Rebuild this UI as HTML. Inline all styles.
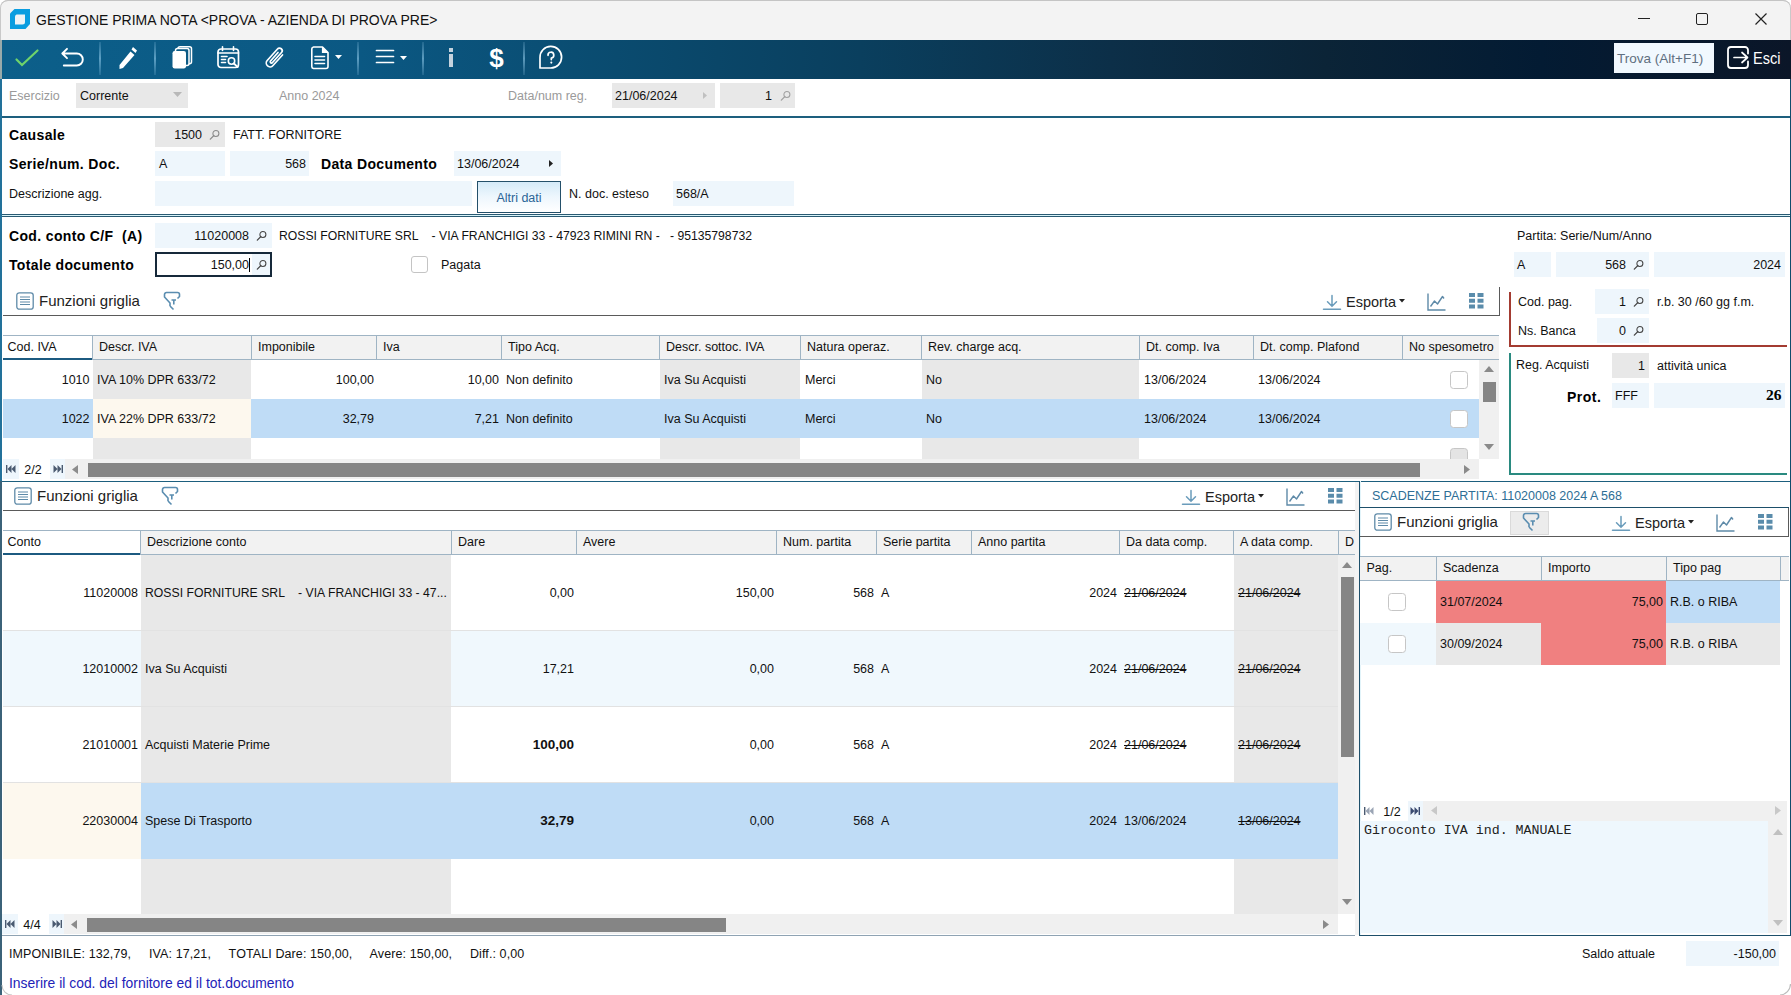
<!DOCTYPE html>
<html><head><meta charset="utf-8"><title>Gestione Prima Nota</title>
<style>
html,body{margin:0;padding:0}
body{width:1791px;height:995px;position:relative;overflow:hidden;background:#fff;font-family:"Liberation Sans",sans-serif;color:#000}
.a{position:absolute}
.t{position:absolute;white-space:pre;line-height:20px;height:20px}
svg.a{overflow:visible}
</style></head><body>

<div class="a" style="left:0px;top:0px;width:1791px;height:995px;background:#ffffff;"></div>
<div class="a" style="left:0px;top:0px;width:1791px;height:40px;background:#f3f3f3;border-radius:8px 8px 0 0;box-shadow:inset 0 1px 0 #c9c9c9, inset 1px 0 0 #c9c9c9, inset -1px 0 0 #c9c9c9;"></div>
<svg class="a" style="left:10px;top:9px" width="20" height="20" viewBox="0 0 20 20"><path d="M4.5 0 H20 V15 L15.5 20 H0 V4.5 Z" fill="#0a9de0"/><path d="M6.5 5.5 H15 V13 A2.5 2.5 0 0 1 12.5 15.5 H5 V8 A2.5 2.5 0 0 1 6.5 5.5 Z" fill="#eef3f6"/></svg>
<div class="t" style="top:9.50px;font-size:14px;left:36px;color:#111;transform:scaleY(1.08);transform-origin:0 50%;">GESTIONE PRIMA NOTA &lt;PROVA - AZIENDA DI PROVA PRE&gt;</div>
<div class="a" style="left:1638px;top:18px;width:12px;height:1.2px;background:#222;"></div>
<div class="a" style="left:1696px;top:13px;width:12px;height:12px;border:1.2px solid #222;border-radius:2px;box-sizing:border-box;"></div>
<svg class="a" style="left:1755px;top:13px" width="12" height="12" viewBox="0 0 12 12"><path d="M0.5 0.5 L11.5 11.5 M11.5 0.5 L0.5 11.5" stroke="#222" stroke-width="1.2"/></svg>
<div class="a" style="left:2px;top:40px;width:1789px;height:39px;background:linear-gradient(90deg,#0c5f8a 0%,#0b5883 20%,#0a4d72 32%,#0a3f5e 48%,#0c2f48 62%,#0b2437 74%,#031b33 86%,#0b1628 100%);"></div>
<div class="a" style="left:0px;top:40px;width:2px;height:39px;background:#9aa;"></div>
<div class="a" style="left:98.6px;top:42px;width:2px;height:33px;background:linear-gradient(180deg,rgba(160,210,240,0.15),rgba(160,215,245,0.55) 50%,rgba(160,210,240,0.15));"></div>
<div class="a" style="left:154px;top:42px;width:2px;height:33px;background:linear-gradient(180deg,rgba(160,210,240,0.15),rgba(160,215,245,0.55) 50%,rgba(160,210,240,0.15));"></div>
<div class="a" style="left:356.7px;top:42px;width:2px;height:33px;background:linear-gradient(180deg,rgba(160,210,240,0.15),rgba(160,215,245,0.55) 50%,rgba(160,210,240,0.15));"></div>
<div class="a" style="left:421.8px;top:42px;width:2px;height:33px;background:linear-gradient(180deg,rgba(160,210,240,0.15),rgba(160,215,245,0.55) 50%,rgba(160,210,240,0.15));"></div>
<div class="a" style="left:523px;top:42px;width:2px;height:33px;background:linear-gradient(180deg,rgba(160,210,240,0.15),rgba(160,215,245,0.55) 50%,rgba(160,210,240,0.15));"></div>
<svg class="a" style="left:15px;top:49px" width="24" height="18" viewBox="0 0 24 18"><path d="M1.5 10.5 L7 16 L22.5 1.5" stroke="#6fd36b" stroke-width="2.2" fill="none" stroke-linecap="round"/></svg>
<svg class="a" style="left:61px;top:47px" width="24" height="21" viewBox="0 0 24 21"><path d="M6 1.8 L1.3 6.5 L6 11.2 M1.3 6.5 H15.8 A6 6 0 0 1 15.8 18.5 H2.8" stroke="#fff" fill="none" stroke-linecap="round" stroke-linejoin="round" stroke-width="1.9"/></svg>
<svg class="a" style="left:119px;top:46px" width="19" height="24" viewBox="0 0 19 24"><path d="M14 1 L18 4.5 L16.5 7 L12.5 3.5 Z M11.5 5.5 L15.5 9 L4 22 L0.5 23 L0.5 19 Z" fill="#fff"/></svg>
<svg class="a" style="left:172px;top:46px" width="21" height="23" viewBox="0 0 21 23"><rect x="6" y="0.8" width="13.5" height="17" rx="2" fill="none" stroke="#fff" stroke-width="1.5"/><rect x="3.5" y="2.5" width="13.5" height="17" rx="2" fill="#0b5a84" stroke="#fff" stroke-width="1.5"/><rect x="0.5" y="5" width="13.5" height="17.5" rx="2.2" fill="#fff"/></svg>
<svg class="a" style="left:217px;top:46px" width="24" height="23" viewBox="0 0 24 23"><rect x="1" y="3" width="20.5" height="18.5" rx="3" stroke="#fff" fill="none" stroke-linecap="round" stroke-linejoin="round" stroke-width="1.7"/><path d="M5.5 0.8 V4.5 M16.5 0.8 V4.5 M1 7 H21.5 M4.5 10.5 H10 M4.5 13.5 H8.5 M4.5 16.5 H8.5" stroke="#fff" fill="none" stroke-linecap="round" stroke-linejoin="round" stroke-width="1.6"/><circle cx="14.5" cy="15" r="3.2" stroke="#fff" fill="none" stroke-linecap="round" stroke-linejoin="round" stroke-width="1.6"/><path d="M17 17.5 L20.5 21" stroke="#fff" fill="none" stroke-linecap="round" stroke-linejoin="round" stroke-width="1.8"/></svg>
<svg class="a" style="left:265px;top:46px" width="20" height="24" viewBox="0 0 20 24"><path d="M17.5 9 L8 19.5 A3.8 3.8 0 0 1 2.2 14.5 L12.5 3 A2.6 2.6 0 0 1 16.5 6.5 L7.5 16.5 A1.2 1.2 0 0 1 5.5 15 L13 6.5" stroke="#fff" fill="none" stroke-linecap="round" stroke-linejoin="round" stroke-width="1.7"/></svg>
<svg class="a" style="left:311px;top:46px" width="32" height="24" viewBox="0 0 32 24"><path d="M2.5 1 H11.5 L17 6.5 V20.5 A2 2 0 0 1 15 22.5 H2.5 A2 2 0 0 1 0.8 20.5 V3 A2 2 0 0 1 2.5 1 Z" stroke="#fff" fill="none" stroke-linecap="round" stroke-linejoin="round" stroke-width="1.6"/><path d="M11.5 1 V6.5 H17" fill="#fff" stroke="#fff" stroke-width="1.2"/><path d="M4 10.5 H13.5 M4 14 H13.5 M4 17.5 H13.5" stroke="#fff" fill="none" stroke-linecap="round" stroke-linejoin="round" stroke-width="1.6"/><path d="M24 9 H31 L27.5 13 Z" fill="#fff"/></svg>
<svg class="a" style="left:375px;top:49px" width="34" height="16" viewBox="0 0 34 16"><path d="M1.5 1.5 H18.5 M1.5 7.5 H18.5 M1.5 13.5 H18.5" stroke="#fff" fill="none" stroke-linecap="round" stroke-linejoin="round" stroke-width="1.7"/><path d="M25 7 H32 L28.5 11 Z" fill="#fff"/></svg>
<div class="a" style="left:448.5px;top:48px;width:4px;height:3.5px;background:#c5d3de;"></div>
<div class="a" style="left:448.5px;top:54px;width:4px;height:13px;background:#c5d3de;"></div>
<div class="t" style="top:47.50px;font-size:26px;left:476.5px;width:40px;text-align:center;color:#fff;font-weight:bold;">$</div>
<svg class="a" style="left:539px;top:46px" width="24" height="23" viewBox="0 0 24 23"><path d="M1 22 V11.5 A10.8 10.8 0 1 1 11.8 22 Z" stroke="#fff" fill="none" stroke-linecap="round" stroke-linejoin="round" stroke-width="1.7"/><path d="M9 9.3 A2.9 2.9 0 1 1 12.3 12 V13.6" stroke="#fff" fill="none" stroke-linecap="round" stroke-linejoin="round" stroke-width="1.7"/><circle cx="12.3" cy="16.6" r="1.05" fill="#fff"/></svg>
<div class="a" style="left:1614px;top:43px;width:100px;height:30px;background:#f1f8fe;"></div>
<div class="t" style="top:48.50px;font-size:13.5px;left:1617px;color:#5f6f80;">Trova (Alt+F1)</div>
<svg class="a" style="left:1727px;top:46px" width="22" height="23" viewBox="0 0 22 23"><path d="M21 7.5 V4 A3 3 0 0 0 18 1 H4 A3 3 0 0 0 1 4 V19 A3 3 0 0 0 4 22 H18 A3 3 0 0 0 21 19 V15.5" stroke="#fff" fill="none" stroke-linecap="round" stroke-linejoin="round" stroke-width="1.8"/><path d="M7 11.5 H20 M15 6.5 L20.5 11.5 L15 16.5" stroke="#fff" fill="none" stroke-linecap="round" stroke-linejoin="round" stroke-width="1.7"/></svg>
<div class="t" style="top:47.50px;font-size:14.5px;left:1753px;color:#fff;transform:scaleY(1.1);">Esci</div>
<div class="a" style="left:0px;top:79px;width:2px;height:402px;background:#22719a;"></div>
<div class="a" style="left:0px;top:481px;width:2px;height:514px;background:#3b6279;"></div>
<div class="a" style="left:1790px;top:79px;width:1px;height:857px;background:#0f4c6c;"></div>
<div class="t" style="top:85.50px;font-size:12.5px;left:9px;color:#9a9a9a;">Esercizio</div>
<div class="a" style="left:76px;top:83px;width:112px;height:25px;background:#e8e8e8;"></div>
<div class="t" style="top:85.50px;font-size:12.5px;left:80px;color:#111;">Corrente</div>
<svg class="a" style="left:173px;top:92px" width="9" height="5" viewBox="0 0 9 5"><path d="M0 0 H9 L4.5 5 Z" fill="#b8b8b8"/></svg>
<div class="t" style="top:85.50px;font-size:12.5px;left:279px;color:#9a9a9a;">Anno 2024</div>
<div class="t" style="top:85.50px;font-size:12.5px;left:508px;color:#9a9a9a;">Data/num reg.</div>
<div class="a" style="left:612px;top:83px;width:103px;height:25px;background:#e8e8e8;"></div>
<div class="t" style="top:85.50px;font-size:12.5px;left:615px;color:#111;">21/06/2024</div>
<svg class="a" style="left:703px;top:92px" width="4" height="7" viewBox="0 0 4 7"><path d="M0 0 L4 3.5 L0 7 Z" fill="#c0c0c0"/></svg>
<div class="a" style="left:720px;top:83px;width:75px;height:25px;background:#e8e8e8;"></div>
<div class="t" style="top:85.50px;font-size:12.5px;left:172px;width:600px;text-align:right;color:#111;">1</div>
<svg class="a" style="left:780px;top:90px" width="11" height="11" viewBox="0 0 11 11"><circle cx="6.9" cy="4.4" r="3" fill="none" stroke="#a0a0a0" stroke-width="1.05"/><path d="M4.8 6.6 L1.3 10.1" stroke="#a0a0a0" stroke-width="1.3" stroke-linecap="round"/></svg>
<div class="a" style="left:2px;top:116px;width:1788px;height:2px;background:#1d5f7e;"></div>
<div class="t" style="top:124.50px;font-size:14px;left:9px;font-weight:bold;letter-spacing:0.35px;">Causale</div>
<div class="a" style="left:155px;top:122px;width:70px;height:25px;background:#e8e8e8;"></div>
<div class="t" style="top:124.50px;font-size:12.5px;left:-398px;width:600px;text-align:right;color:#111;">1500</div>
<svg class="a" style="left:209px;top:129px" width="11" height="11" viewBox="0 0 11 11"><circle cx="6.9" cy="4.4" r="3" fill="none" stroke="#8a8a8a" stroke-width="1.05"/><path d="M4.8 6.6 L1.3 10.1" stroke="#8a8a8a" stroke-width="1.3" stroke-linecap="round"/></svg>
<div class="t" style="top:124.50px;font-size:12.5px;left:233px;color:#111;">FATT. FORNITORE</div>
<div class="t" style="top:153.50px;font-size:14px;left:9px;font-weight:bold;letter-spacing:0.35px;">Serie/num. Doc.</div>
<div class="a" style="left:155px;top:151px;width:70px;height:25px;background:#eef6fc;"></div>
<div class="t" style="top:153.50px;font-size:12.5px;left:159px;color:#111;">A</div>
<div class="a" style="left:230px;top:151px;width:79px;height:25px;background:#eef6fc;"></div>
<div class="t" style="top:153.50px;font-size:12.5px;left:-294px;width:600px;text-align:right;color:#111;">568</div>
<div class="t" style="top:153.50px;font-size:14px;left:321px;font-weight:bold;letter-spacing:0.35px;">Data Documento</div>
<div class="a" style="left:454px;top:151px;width:107px;height:25px;background:#eef6fc;"></div>
<div class="t" style="top:153.50px;font-size:12.5px;left:457px;color:#111;">13/06/2024</div>
<svg class="a" style="left:549px;top:160px" width="4" height="7" viewBox="0 0 4 7"><path d="M0 0 L4 3.5 L0 7 Z" fill="#222"/></svg>
<div class="t" style="top:183.50px;font-size:12.5px;left:9px;color:#111;">Descrizione agg.</div>
<div class="a" style="left:155px;top:181px;width:317px;height:25px;background:#eef6fc;"></div>
<div class="a" style="left:477px;top:181px;width:84px;height:32px;background:linear-gradient(180deg,#d4eaf8 0%,#eef7fd 50%,#ffffff 100%);border:1px solid #24506a;box-sizing:border-box;"></div>
<div class="t" style="top:187.50px;font-size:12.5px;left:479.0px;width:80px;text-align:center;color:#2a6496;">Altri dati</div>
<div class="t" style="top:183.50px;font-size:12.5px;left:569px;color:#111;">N. doc. esteso</div>
<div class="a" style="left:673px;top:181px;width:121px;height:25px;background:#eef6fc;"></div>
<div class="t" style="top:183.50px;font-size:12.5px;left:676px;color:#111;">568/A</div>
<div class="a" style="left:2px;top:214px;width:1788px;height:1px;background:#2a5a72;"></div>
<div class="a" style="left:2px;top:215px;width:1787px;height:1px;background:#d8f4fa;"></div>
<div class="a" style="left:2px;top:216px;width:1788px;height:1px;background:#2a5a72;"></div>
<div class="t" style="top:225.50px;font-size:14px;left:9px;font-weight:bold;letter-spacing:0.35px;">Cod. conto C/F  (A)</div>
<div class="a" style="left:155px;top:223px;width:117px;height:25px;background:#eef6fc;"></div>
<div class="t" style="top:225.50px;font-size:12.5px;left:-351px;width:600px;text-align:right;color:#111;">11020008</div>
<svg class="a" style="left:256px;top:230px" width="11" height="11" viewBox="0 0 11 11"><circle cx="6.9" cy="4.4" r="3" fill="none" stroke="#444" stroke-width="1.05"/><path d="M4.8 6.6 L1.3 10.1" stroke="#444" stroke-width="1.3" stroke-linecap="round"/></svg>
<div class="t" style="top:225.50px;font-size:12.2px;left:279px;color:#111;">ROSSI FORNITURE SRL    - VIA FRANCHIGI 33 - 47923 RIMINI RN -   - 95135798732</div>
<div class="t" style="top:254.50px;font-size:14px;left:9px;font-weight:bold;letter-spacing:0.35px;">Totale documento</div>
<div class="a" style="left:155px;top:252px;width:117px;height:25px;background:#ffffff;border:2px solid #16293a;box-sizing:border-box;"></div>
<div class="a" style="left:252px;top:254px;width:18px;height:21px;background:#eef6fc;"></div>
<div class="t" style="top:254.50px;font-size:12.5px;left:-351px;width:600px;text-align:right;color:#111;">150,00</div>
<div class="a" style="left:249px;top:258px;width:1px;height:14px;background:#000;"></div>
<svg class="a" style="left:256px;top:259px" width="11" height="11" viewBox="0 0 11 11"><circle cx="6.9" cy="4.4" r="3" fill="none" stroke="#444" stroke-width="1.05"/><path d="M4.8 6.6 L1.3 10.1" stroke="#444" stroke-width="1.3" stroke-linecap="round"/></svg>
<div class="a" style="left:411px;top:256px;width:17px;height:17px;background:#fff;border:1.3px solid #c4c4c4;border-radius:3px;box-sizing:border-box;"></div>
<div class="t" style="top:254.50px;font-size:12.5px;left:441px;color:#111;">Pagata</div>
<svg class="a" style="left:16px;top:292px" width="18" height="18" viewBox="0 0 18 18"><rect x="0.8" y="0.8" width="16.4" height="16.4" rx="2.5" fill="none" stroke="#5e8aa8" stroke-width="1.3"/><path d="M4 5 H14 M4 7.5 H14 M4 10 H14 M4 12.5 H14" stroke="#5e8aa8" stroke-width="1.2"/></svg>
<div class="t" style="top:291.00px;font-size:15px;left:39px;color:#222;">Funzioni griglia</div>
<svg class="a" style="left:163px;top:291px" width="18" height="20" viewBox="0 0 18 20"><path d="M7 15 V12 L1.5 6 V3.5 A2 2 0 0 1 3.5 1.5 H14.5 A2 2 0 0 1 16.5 3.5 V5.5 L14.5 7.5 M7 15 L10.5 18.5 M8.5 9 H13 M10.8 9 V13.5" fill="none" stroke="#5a8db0" stroke-width="1.6" stroke-linejoin="round"/></svg>
<svg class="a" style="left:1323px;top:295px" width="18" height="15" viewBox="0 0 18 15"><path d="M9 0.5 V11 M4.5 6.8 L9 11.2 L13.5 6.8 M0.5 14.2 H17.5" fill="none" stroke="#6a9cbb" stroke-width="1.5" stroke-linecap="round"/></svg>
<div class="t" style="top:291.50px;font-size:14.5px;left:1346px;color:#222;">Esporta</div>
<svg class="a" style="left:1399px;top:299px" width="6" height="4" viewBox="0 0 6 4"><path d="M0 0 H6 L3 3.5 Z" fill="#222"/></svg>
<svg class="a" style="left:1427px;top:293px" width="19" height="18" viewBox="0 0 19 18"><path d="M1 0.5 V17 H18.5" fill="none" stroke="#5e8aa8" stroke-width="1.4"/><path d="M3.5 13.5 L7.5 8 L10.5 11 L15.5 3.5 L17 5.5" fill="none" stroke="#5e8aa8" stroke-width="1.4" stroke-linejoin="round"/></svg>
<svg class="a" style="left:1469px;top:293px" width="15" height="16" viewBox="0 0 15 16"><path d="M0 0H6V4H0Z M8.5 0H14.5V4H8.5Z M0 5.8H6V9.8H0Z M8.5 5.8H14.5V9.8H8.5Z M0 11.6H6V15.6H0Z M8.5 11.6H14.5V15.6H8.5Z" fill="#5a8cab"/></svg>
<div class="a" style="left:3px;top:315px;width:1497px;height:1px;background:#5a5a5a;"></div>
<div class="a" style="left:1499px;top:287px;width:1px;height:29px;background:#5a5a5a;"></div>
<div class="a" style="left:3px;top:335px;width:1496px;height:25px;background:#f2f2f2;"></div>
<div class="a" style="left:3px;top:335px;width:1496px;height:1px;background:#9fb4c4;"></div>
<div class="a" style="left:3px;top:359px;width:1496px;height:1px;background:#9fb4c4;"></div>
<div class="a" style="left:3px;top:336px;width:89px;height:24px;background:#ffffff;"></div>
<div class="a" style="left:3px;top:358px;width:89px;height:2px;background:#1c5a80;"></div>
<div class="a" style="left:92px;top:336px;width:1px;height:23px;background:#9fb4c4;"></div>
<div class="a" style="left:251px;top:336px;width:1px;height:23px;background:#9fb4c4;"></div>
<div class="a" style="left:376px;top:336px;width:1px;height:23px;background:#9fb4c4;"></div>
<div class="a" style="left:501px;top:336px;width:1px;height:23px;background:#9fb4c4;"></div>
<div class="a" style="left:659px;top:336px;width:1px;height:23px;background:#9fb4c4;"></div>
<div class="a" style="left:800px;top:336px;width:1px;height:23px;background:#9fb4c4;"></div>
<div class="a" style="left:921px;top:336px;width:1px;height:23px;background:#9fb4c4;"></div>
<div class="a" style="left:1139px;top:336px;width:1px;height:23px;background:#9fb4c4;"></div>
<div class="a" style="left:1253px;top:336px;width:1px;height:23px;background:#9fb4c4;"></div>
<div class="a" style="left:1402px;top:336px;width:1px;height:23px;background:#9fb4c4;"></div>
<div class="t" style="top:336.70px;font-size:12.5px;left:7.5px;color:#111;">Cod. IVA</div>
<div class="t" style="top:336.70px;font-size:12.5px;left:99px;color:#111;">Descr. IVA</div>
<div class="t" style="top:336.70px;font-size:12.5px;left:258px;color:#111;">Imponibile</div>
<div class="t" style="top:336.70px;font-size:12.5px;left:383px;color:#111;">Iva</div>
<div class="t" style="top:336.70px;font-size:12.5px;left:508px;color:#111;">Tipo Acq.</div>
<div class="t" style="top:336.70px;font-size:12.5px;left:666px;color:#111;">Descr. sottoc. IVA</div>
<div class="t" style="top:336.70px;font-size:12.5px;left:807px;color:#111;">Natura operaz.</div>
<div class="t" style="top:336.70px;font-size:12.5px;left:928px;color:#111;">Rev. charge acq.</div>
<div class="t" style="top:336.70px;font-size:12.5px;left:1146px;color:#111;">Dt. comp. Iva</div>
<div class="t" style="top:336.70px;font-size:12.5px;left:1260px;color:#111;">Dt. comp. Plafond</div>
<div class="t" style="top:336.70px;font-size:12.5px;left:1409px;color:#111;">No spesometro</div>
<div class="a" style="left:3px;top:360px;width:1476px;height:39px;background:#fff;"></div>
<div class="a" style="left:93px;top:360px;width:158px;height:39px;background:#e8e8e8;"></div>
<div class="a" style="left:660px;top:360px;width:140px;height:39px;background:#e8e8e8;"></div>
<div class="a" style="left:922px;top:360px;width:217px;height:39px;background:#e8e8e8;"></div>
<div class="a" style="left:3px;top:399px;width:1476px;height:39px;background:#bfdcf6;"></div>
<div class="a" style="left:93px;top:399px;width:158px;height:39px;background:#fdf8ee;"></div>
<div class="a" style="left:3px;top:438px;width:1476px;height:21px;background:#fff;"></div>
<div class="a" style="left:93px;top:438px;width:158px;height:21px;background:#e8e8e8;"></div>
<div class="a" style="left:660px;top:438px;width:140px;height:21px;background:#e8e8e8;"></div>
<div class="a" style="left:922px;top:438px;width:217px;height:21px;background:#e8e8e8;"></div>
<div class="t" style="top:369.50px;font-size:12.5px;left:-510.5px;width:600px;text-align:right;color:#111;">1010</div>
<div class="t" style="top:369.50px;font-size:12.5px;left:97px;color:#111;">IVA 10% DPR 633/72</div>
<div class="t" style="top:369.50px;font-size:12.5px;left:-226px;width:600px;text-align:right;color:#111;">100,00</div>
<div class="t" style="top:369.50px;font-size:12.5px;left:-101px;width:600px;text-align:right;color:#111;">10,00</div>
<div class="t" style="top:369.50px;font-size:12.5px;left:506px;color:#111;">Non definito</div>
<div class="t" style="top:369.50px;font-size:12.5px;left:664px;color:#111;">Iva Su Acquisti</div>
<div class="t" style="top:369.50px;font-size:12.5px;left:805px;color:#111;">Merci</div>
<div class="t" style="top:369.50px;font-size:12.5px;left:926px;color:#111;">No</div>
<div class="t" style="top:369.50px;font-size:12.5px;left:1144px;color:#111;">13/06/2024</div>
<div class="t" style="top:369.50px;font-size:12.5px;left:1258px;color:#111;">13/06/2024</div>
<div class="t" style="top:408.50px;font-size:12.5px;left:-510.5px;width:600px;text-align:right;color:#111;">1022</div>
<div class="t" style="top:408.50px;font-size:12.5px;left:97px;color:#111;">IVA 22% DPR 633/72</div>
<div class="t" style="top:408.50px;font-size:12.5px;left:-226px;width:600px;text-align:right;color:#111;">32,79</div>
<div class="t" style="top:408.50px;font-size:12.5px;left:-101px;width:600px;text-align:right;color:#111;">7,21</div>
<div class="t" style="top:408.50px;font-size:12.5px;left:506px;color:#111;">Non definito</div>
<div class="t" style="top:408.50px;font-size:12.5px;left:664px;color:#111;">Iva Su Acquisti</div>
<div class="t" style="top:408.50px;font-size:12.5px;left:805px;color:#111;">Merci</div>
<div class="t" style="top:408.50px;font-size:12.5px;left:926px;color:#111;">No</div>
<div class="t" style="top:408.50px;font-size:12.5px;left:1144px;color:#111;">13/06/2024</div>
<div class="t" style="top:408.50px;font-size:12.5px;left:1258px;color:#111;">13/06/2024</div>
<div class="a" style="left:1450px;top:371px;width:18px;height:18px;background:#fff;border:1.4px solid #c6c6c6;border-radius:3.5px;box-sizing:border-box;"></div>
<div class="a" style="left:1450px;top:410px;width:18px;height:18px;background:#fff;border:1.4px solid #c6c6c6;border-radius:3.5px;box-sizing:border-box;"></div>
<div class="a" style="left:1450px;top:448px;width:18px;height:11px;overflow:hidden"><div style="width:18px;height:18px;background:#e4e4e4;border:1.4px solid #c6c6c6;border-radius:3.5px;box-sizing:border-box"></div></div>
<div class="a" style="left:1479px;top:360px;width:20px;height:99px;background:#f0f0f0;"></div>
<svg class="a" style="left:1484px;top:366px" width="10" height="6" viewBox="0 0 10 6"><path d="M0 6 L5 0 L10 6 Z" fill="#8a8a8a"/></svg>
<div class="a" style="left:1483px;top:382px;width:13px;height:20px;background:#858585;"></div>
<svg class="a" style="left:1484px;top:444px" width="10" height="6" viewBox="0 0 10 6"><path d="M0 0 L10 0 L5 6 Z" fill="#8a8a8a"/></svg>
<div class="a" style="left:3px;top:459px;width:1476px;height:20px;background:#f0f0f0;"></div>
<div class="a" style="left:3px;top:459px;width:16px;height:20px;background:#eef6fc;"></div>
<div class="a" style="left:19px;top:459px;width:31px;height:20px;background:#ffffff;"></div>
<div class="a" style="left:50px;top:459px;width:15px;height:20px;background:#eef6fc;"></div>
<svg class="a" style="left:6px;top:465px" width="10" height="8" viewBox="0 0 10 8"><path d="M0.7 0 V8" stroke="#4a5a70" stroke-width="1.4"/><path d="M5.5 0 L1.5 4 L5.5 8 Z M9.5 0 L5.5 4 L9.5 8 Z" fill="#4a5a70"/></svg>
<div class="t" style="top:459.50px;font-size:12.5px;left:18.0px;width:30px;text-align:center;color:#111;">2/2</div>
<svg class="a" style="left:53px;top:465px" width="10" height="8" viewBox="0 0 10 8"><path d="M9.3 0 V8" stroke="#4a5a70" stroke-width="1.4"/><path d="M0.5 0 L4.5 4 L0.5 8 Z M4.5 0 L8.5 4 L4.5 8 Z" fill="#4a5a70"/></svg>
<svg class="a" style="left:72px;top:465px" width="6" height="9" viewBox="0 0 6 9"><path d="M6 0 L0 4.5 L6 9 Z" fill="#8c8c8c"/></svg>
<div class="a" style="left:88px;top:463px;width:1332px;height:14px;background:#858585;"></div>
<svg class="a" style="left:1464px;top:465px" width="6" height="9" viewBox="0 0 6 9"><path d="M0 0 L6 4.5 L0 9 Z" fill="#8a8a8a"/></svg>
<div class="a" style="left:1479px;top:459px;width:20px;height:20px;background:#f0f0f0;"></div>
<div class="a" style="left:1479px;top:459px;width:20px;height:20px;background:#ffffff;"></div>
<div class="t" style="top:225.50px;font-size:12.5px;left:1517px;color:#111;">Partita: Serie/Num/Anno</div>
<div class="a" style="left:1514px;top:252px;width:37px;height:25px;background:#eef6fc;"></div>
<div class="t" style="top:254.50px;font-size:12.5px;left:1517px;color:#111;">A</div>
<div class="a" style="left:1556px;top:252px;width:93px;height:25px;background:#eef6fc;"></div>
<div class="t" style="top:254.50px;font-size:12.5px;left:1026px;width:600px;text-align:right;color:#111;">568</div>
<svg class="a" style="left:1633px;top:259px" width="11" height="11" viewBox="0 0 11 11"><circle cx="6.9" cy="4.4" r="3" fill="none" stroke="#444" stroke-width="1.05"/><path d="M4.8 6.6 L1.3 10.1" stroke="#444" stroke-width="1.3" stroke-linecap="round"/></svg>
<div class="a" style="left:1654px;top:252px;width:131px;height:25px;background:#eef6fc;"></div>
<div class="t" style="top:254.50px;font-size:12.5px;left:1181px;width:600px;text-align:right;color:#111;">2024</div>
<div class="a" style="left:1509px;top:292px;width:2px;height:55px;background:#a33b31;"></div>
<div class="a" style="left:1509px;top:345px;width:278px;height:2px;background:#a33b31;"></div>
<div class="t" style="top:291.50px;font-size:12.5px;left:1518px;color:#111;">Cod. pag.</div>
<div class="a" style="left:1595px;top:289px;width:54px;height:25px;background:#eef6fc;"></div>
<div class="t" style="top:291.50px;font-size:12.5px;left:1026px;width:600px;text-align:right;color:#111;">1</div>
<svg class="a" style="left:1633px;top:296px" width="11" height="11" viewBox="0 0 11 11"><circle cx="6.9" cy="4.4" r="3" fill="none" stroke="#444" stroke-width="1.05"/><path d="M4.8 6.6 L1.3 10.1" stroke="#444" stroke-width="1.3" stroke-linecap="round"/></svg>
<div class="t" style="top:291.50px;font-size:12.5px;left:1657px;color:#111;">r.b. 30 /60 gg f.m.</div>
<div class="t" style="top:320.50px;font-size:12.5px;left:1518px;color:#111;">Ns. Banca</div>
<div class="a" style="left:1597px;top:318px;width:52px;height:25px;background:#eef6fc;"></div>
<div class="t" style="top:320.50px;font-size:12.5px;left:1026px;width:600px;text-align:right;color:#111;">0</div>
<svg class="a" style="left:1633px;top:325px" width="11" height="11" viewBox="0 0 11 11"><circle cx="6.9" cy="4.4" r="3" fill="none" stroke="#444" stroke-width="1.05"/><path d="M4.8 6.6 L1.3 10.1" stroke="#444" stroke-width="1.3" stroke-linecap="round"/></svg>
<div class="a" style="left:1509px;top:353px;width:2px;height:122px;background:#2a8a80;"></div>
<div class="a" style="left:1509px;top:473px;width:278px;height:2px;background:#2a8a80;"></div>
<div class="t" style="top:355.00px;font-size:12.5px;left:1516px;color:#111;">Reg. Acquisti</div>
<div class="a" style="left:1612px;top:353px;width:37px;height:25px;background:#e8e8e8;"></div>
<div class="t" style="top:355.50px;font-size:12.5px;left:1045px;width:600px;text-align:right;color:#111;">1</div>
<div class="t" style="top:355.50px;font-size:12.5px;left:1657px;color:#111;">attività unica</div>
<div class="t" style="top:386.50px;font-size:14px;left:1567px;font-weight:bold;letter-spacing:0.5px;">Prot.</div>
<div class="a" style="left:1612px;top:383px;width:37px;height:25px;background:#eef6fc;"></div>
<div class="t" style="top:385.50px;font-size:12.5px;left:1615px;color:#111;">FFF</div>
<div class="a" style="left:1654px;top:383px;width:131px;height:25px;background:#eef6fc;"></div>
<div class="t" style="top:385.00px;font-size:15.5px;left:1181.5px;width:600px;text-align:right;font-weight:bold;font-family:'Liberation Serif',serif;">26</div>
<div class="a" style="left:2px;top:480.5px;width:1788px;height:1.6px;background:#1d5f7e;"></div>
<svg class="a" style="left:14px;top:487px" width="18" height="18" viewBox="0 0 18 18"><rect x="0.8" y="0.8" width="16.4" height="16.4" rx="2.5" fill="none" stroke="#5e8aa8" stroke-width="1.3"/><path d="M4 5 H14 M4 7.5 H14 M4 10 H14 M4 12.5 H14" stroke="#5e8aa8" stroke-width="1.2"/></svg>
<div class="t" style="top:486.00px;font-size:15px;left:37px;color:#222;">Funzioni griglia</div>
<svg class="a" style="left:161px;top:486px" width="18" height="20" viewBox="0 0 18 20"><path d="M7 15 V12 L1.5 6 V3.5 A2 2 0 0 1 3.5 1.5 H14.5 A2 2 0 0 1 16.5 3.5 V5.5 L14.5 7.5 M7 15 L10.5 18.5 M8.5 9 H13 M10.8 9 V13.5" fill="none" stroke="#5a8db0" stroke-width="1.6" stroke-linejoin="round"/></svg>
<svg class="a" style="left:1182px;top:490px" width="18" height="15" viewBox="0 0 18 15"><path d="M9 0.5 V11 M4.5 6.8 L9 11.2 L13.5 6.8 M0.5 14.2 H17.5" fill="none" stroke="#6a9cbb" stroke-width="1.5" stroke-linecap="round"/></svg>
<div class="t" style="top:486.50px;font-size:14.5px;left:1205px;color:#222;">Esporta</div>
<svg class="a" style="left:1258px;top:494px" width="6" height="4" viewBox="0 0 6 4"><path d="M0 0 H6 L3 3.5 Z" fill="#222"/></svg>
<svg class="a" style="left:1286px;top:488px" width="19" height="18" viewBox="0 0 19 18"><path d="M1 0.5 V17 H18.5" fill="none" stroke="#5e8aa8" stroke-width="1.4"/><path d="M3.5 13.5 L7.5 8 L10.5 11 L15.5 3.5 L17 5.5" fill="none" stroke="#5e8aa8" stroke-width="1.4" stroke-linejoin="round"/></svg>
<svg class="a" style="left:1328px;top:488px" width="15" height="16" viewBox="0 0 15 16"><path d="M0 0H6V4H0Z M8.5 0H14.5V4H8.5Z M0 5.8H6V9.8H0Z M8.5 5.8H14.5V9.8H8.5Z M0 11.6H6V15.6H0Z M8.5 11.6H14.5V15.6H8.5Z" fill="#5a8cab"/></svg>
<div class="a" style="left:3px;top:510px;width:1352px;height:1px;background:#5a5a5a;"></div>
<div class="a" style="left:1355px;top:482.2px;width:4px;height:453px;background:#f3f3f3;"></div>
<div class="a" style="left:3px;top:530px;width:1352px;height:25px;background:#f2f2f2;"></div>
<div class="a" style="left:3px;top:530px;width:1352px;height:1px;background:#9fb4c4;"></div>
<div class="a" style="left:3px;top:554px;width:1352px;height:1px;background:#9fb4c4;"></div>
<div class="a" style="left:3px;top:531px;width:137px;height:24px;background:#ffffff;"></div>
<div class="a" style="left:3px;top:553px;width:137px;height:2px;background:#1c5a80;"></div>
<div class="a" style="left:140px;top:531px;width:1px;height:23px;background:#9fb4c4;"></div>
<div class="a" style="left:451px;top:531px;width:1px;height:23px;background:#9fb4c4;"></div>
<div class="a" style="left:576px;top:531px;width:1px;height:23px;background:#9fb4c4;"></div>
<div class="a" style="left:776px;top:531px;width:1px;height:23px;background:#9fb4c4;"></div>
<div class="a" style="left:876px;top:531px;width:1px;height:23px;background:#9fb4c4;"></div>
<div class="a" style="left:971px;top:531px;width:1px;height:23px;background:#9fb4c4;"></div>
<div class="a" style="left:1119px;top:531px;width:1px;height:23px;background:#9fb4c4;"></div>
<div class="a" style="left:1233px;top:531px;width:1px;height:23px;background:#9fb4c4;"></div>
<div class="a" style="left:1338px;top:531px;width:1px;height:23px;background:#9fb4c4;"></div>
<div class="t" style="top:531.70px;font-size:12.5px;left:7.5px;color:#111;">Conto</div>
<div class="t" style="top:531.70px;font-size:12.5px;left:147px;color:#111;">Descrizione conto</div>
<div class="t" style="top:531.70px;font-size:12.5px;left:458px;color:#111;">Dare</div>
<div class="t" style="top:531.70px;font-size:12.5px;left:583px;color:#111;">Avere</div>
<div class="t" style="top:531.70px;font-size:12.5px;left:783px;color:#111;">Num. partita</div>
<div class="t" style="top:531.70px;font-size:12.5px;left:883px;color:#111;">Serie partita</div>
<div class="t" style="top:531.70px;font-size:12.5px;left:978px;color:#111;">Anno partita</div>
<div class="t" style="top:531.70px;font-size:12.5px;left:1126px;color:#111;">Da data comp.</div>
<div class="t" style="top:531.70px;font-size:12.5px;left:1240px;color:#111;">A data comp.</div>
<div class="t" style="top:531.70px;font-size:12.5px;left:1345px;color:#111;">D</div>
<div class="a" style="left:3px;top:555px;width:1336px;height:76px;background:#fff;"></div>
<div class="a" style="left:141px;top:555px;width:310px;height:76px;background:#e8e8e8;"></div>
<div class="a" style="left:1234px;top:555px;width:104px;height:76px;background:#e8e8e8;"></div>
<div class="a" style="left:3px;top:630px;width:1336px;height:1px;background:#e2e2e2;"></div>
<div class="a" style="left:3px;top:631px;width:1336px;height:76px;background:#f0f8fd;"></div>
<div class="a" style="left:141px;top:631px;width:310px;height:76px;background:#e8e8e8;"></div>
<div class="a" style="left:1234px;top:631px;width:104px;height:76px;background:#e8e8e8;"></div>
<div class="a" style="left:3px;top:706px;width:1336px;height:1px;background:#e2e2e2;"></div>
<div class="a" style="left:3px;top:707px;width:1336px;height:76px;background:#fff;"></div>
<div class="a" style="left:141px;top:707px;width:310px;height:76px;background:#e8e8e8;"></div>
<div class="a" style="left:1234px;top:707px;width:104px;height:76px;background:#e8e8e8;"></div>
<div class="a" style="left:3px;top:782px;width:1336px;height:1px;background:#e2e2e2;"></div>
<div class="a" style="left:3px;top:783px;width:1336px;height:76px;background:#bfdcf6;"></div>
<div class="a" style="left:3px;top:783px;width:138px;height:76px;background:#fdf8ee;"></div>
<div class="t" style="top:582.50px;font-size:12.5px;left:-462px;width:600px;text-align:right;color:#111;">11020008</div>
<div class="t" style="top:582.50px;font-size:12.5px;left:145px;color:#111;transform:scaleX(0.978);transform-origin:0 50%;">ROSSI FORNITURE SRL    - VIA FRANCHIGI 33 - 47...</div>
<div class="t" style="top:582.50px;font-size:12.5px;left:-26px;width:600px;text-align:right;color:#111;">0,00</div>
<div class="t" style="top:582.50px;font-size:12.5px;left:174px;width:600px;text-align:right;color:#111;">150,00</div>
<div class="t" style="top:582.50px;font-size:12.5px;left:274px;width:600px;text-align:right;color:#111;">568</div>
<div class="t" style="top:582.50px;font-size:12.5px;left:881px;color:#111;">A</div>
<div class="t" style="top:582.50px;font-size:12.5px;left:517px;width:600px;text-align:right;color:#111;">2024</div>
<div class="t" style="top:582.50px;font-size:12.5px;left:1124px;color:#111;text-decoration:line-through;">21/06/2024</div>
<div class="t" style="top:582.50px;font-size:12.5px;left:1238px;color:#111;text-decoration:line-through;">21/06/2024</div>
<div class="t" style="top:658.50px;font-size:12.5px;left:-462px;width:600px;text-align:right;color:#111;">12010002</div>
<div class="t" style="top:658.50px;font-size:12.5px;left:145px;color:#111;">Iva Su Acquisti</div>
<div class="t" style="top:658.50px;font-size:12.5px;left:-26px;width:600px;text-align:right;color:#111;">17,21</div>
<div class="t" style="top:658.50px;font-size:12.5px;left:174px;width:600px;text-align:right;color:#111;">0,00</div>
<div class="t" style="top:658.50px;font-size:12.5px;left:274px;width:600px;text-align:right;color:#111;">568</div>
<div class="t" style="top:658.50px;font-size:12.5px;left:881px;color:#111;">A</div>
<div class="t" style="top:658.50px;font-size:12.5px;left:517px;width:600px;text-align:right;color:#111;">2024</div>
<div class="t" style="top:658.50px;font-size:12.5px;left:1124px;color:#111;text-decoration:line-through;">21/06/2024</div>
<div class="t" style="top:658.50px;font-size:12.5px;left:1238px;color:#111;text-decoration:line-through;">21/06/2024</div>
<div class="t" style="top:734.50px;font-size:12.5px;left:-462px;width:600px;text-align:right;color:#111;">21010001</div>
<div class="t" style="top:734.50px;font-size:12.5px;left:145px;color:#111;">Acquisti Materie Prime</div>
<div class="t" style="top:734.50px;font-size:13.5px;left:-26px;width:600px;text-align:right;color:#111;font-weight:bold;">100,00</div>
<div class="t" style="top:734.50px;font-size:12.5px;left:174px;width:600px;text-align:right;color:#111;">0,00</div>
<div class="t" style="top:734.50px;font-size:12.5px;left:274px;width:600px;text-align:right;color:#111;">568</div>
<div class="t" style="top:734.50px;font-size:12.5px;left:881px;color:#111;">A</div>
<div class="t" style="top:734.50px;font-size:12.5px;left:517px;width:600px;text-align:right;color:#111;">2024</div>
<div class="t" style="top:734.50px;font-size:12.5px;left:1124px;color:#111;text-decoration:line-through;">21/06/2024</div>
<div class="t" style="top:734.50px;font-size:12.5px;left:1238px;color:#111;text-decoration:line-through;">21/06/2024</div>
<div class="t" style="top:810.50px;font-size:12.5px;left:-462px;width:600px;text-align:right;color:#111;">22030004</div>
<div class="t" style="top:810.50px;font-size:12.5px;left:145px;color:#111;">Spese Di Trasporto</div>
<div class="t" style="top:810.50px;font-size:13.5px;left:-26px;width:600px;text-align:right;color:#111;font-weight:bold;">32,79</div>
<div class="t" style="top:810.50px;font-size:12.5px;left:174px;width:600px;text-align:right;color:#111;">0,00</div>
<div class="t" style="top:810.50px;font-size:12.5px;left:274px;width:600px;text-align:right;color:#111;">568</div>
<div class="t" style="top:810.50px;font-size:12.5px;left:881px;color:#111;">A</div>
<div class="t" style="top:810.50px;font-size:12.5px;left:517px;width:600px;text-align:right;color:#111;">2024</div>
<div class="t" style="top:810.50px;font-size:12.5px;left:1124px;color:#111;">13/06/2024</div>
<div class="t" style="top:810.50px;font-size:12.5px;left:1238px;color:#111;text-decoration:line-through;">13/06/2024</div>
<div class="a" style="left:3px;top:859px;width:1336px;height:55px;background:#fff;"></div>
<div class="a" style="left:141px;top:859px;width:310px;height:55px;background:#e8e8e8;"></div>
<div class="a" style="left:1234px;top:859px;width:104px;height:55px;background:#e8e8e8;"></div>
<div class="a" style="left:1338px;top:555px;width:17px;height:359px;background:#f0f0f0;"></div>
<svg class="a" style="left:1342px;top:562px" width="10" height="6" viewBox="0 0 10 6"><path d="M0 6 L5 0 L10 6 Z" fill="#8a8a8a"/></svg>
<div class="a" style="left:1341px;top:577px;width:13px;height:180px;background:#858585;"></div>
<svg class="a" style="left:1342px;top:899px" width="10" height="6" viewBox="0 0 10 6"><path d="M0 0 L10 0 L5 6 Z" fill="#8a8a8a"/></svg>
<div class="a" style="left:2px;top:914px;width:1336px;height:20px;background:#f0f0f0;"></div>
<div class="a" style="left:2px;top:914px;width:16px;height:20px;background:#eef6fc;"></div>
<div class="a" style="left:18px;top:914px;width:31px;height:20px;background:#ffffff;"></div>
<div class="a" style="left:49px;top:914px;width:15px;height:20px;background:#eef6fc;"></div>
<svg class="a" style="left:5px;top:920px" width="10" height="8" viewBox="0 0 10 8"><path d="M0.7 0 V8" stroke="#4a5a70" stroke-width="1.4"/><path d="M5.5 0 L1.5 4 L5.5 8 Z M9.5 0 L5.5 4 L9.5 8 Z" fill="#4a5a70"/></svg>
<div class="t" style="top:914.50px;font-size:12.5px;left:17.0px;width:30px;text-align:center;color:#111;">4/4</div>
<svg class="a" style="left:52px;top:920px" width="10" height="8" viewBox="0 0 10 8"><path d="M9.3 0 V8" stroke="#4a5a70" stroke-width="1.4"/><path d="M0.5 0 L4.5 4 L0.5 8 Z M4.5 0 L8.5 4 L4.5 8 Z" fill="#4a5a70"/></svg>
<svg class="a" style="left:71px;top:920px" width="6" height="9" viewBox="0 0 6 9"><path d="M6 0 L0 4.5 L6 9 Z" fill="#8c8c8c"/></svg>
<div class="a" style="left:87px;top:918px;width:639px;height:14px;background:#858585;"></div>
<svg class="a" style="left:1323px;top:920px" width="6" height="9" viewBox="0 0 6 9"><path d="M0 0 L6 4.5 L0 9 Z" fill="#8a8a8a"/></svg>
<div class="a" style="left:1338px;top:914px;width:17px;height:21px;background:#ffffff;"></div>
<div class="a" style="left:2px;top:935px;width:1353px;height:1px;background:#8fa3b3;"></div>
<div class="a" style="left:1359px;top:481px;width:1px;height:455px;background:#1d4f6a;"></div>
<div class="a" style="left:1360px;top:481px;width:1px;height:454px;background:#e2f4fa;"></div>
<div class="a" style="left:1359px;top:935px;width:431px;height:1px;background:#1d4f6a;"></div>
<div class="t" style="top:485.50px;font-size:12.5px;left:1372px;color:#2d6e95;">SCADENZE PARTITA: 11020008 2024 A 568</div>
<div class="a" style="left:1360px;top:507px;width:429px;height:1px;background:#1d4f6a;"></div>
<div class="a" style="left:1360px;top:536px;width:428px;height:1px;background:#5a5a5a;"></div>
<div class="a" style="left:1788px;top:508px;width:1px;height:29px;background:#5a5a5a;"></div>
<svg class="a" style="left:1374px;top:513px" width="18" height="18" viewBox="0 0 18 18"><rect x="0.8" y="0.8" width="16.4" height="16.4" rx="2.5" fill="none" stroke="#5e8aa8" stroke-width="1.3"/><path d="M4 5 H14 M4 7.5 H14 M4 10 H14 M4 12.5 H14" stroke="#5e8aa8" stroke-width="1.2"/></svg>
<div class="t" style="top:512.00px;font-size:15px;left:1397px;color:#222;">Funzioni griglia</div>
<div class="a" style="left:1510px;top:511px;width:39px;height:24px;background:#ececec;border:1px solid #dadada;box-sizing:border-box;"></div>
<svg class="a" style="left:1522px;top:512px" width="18" height="20" viewBox="0 0 18 20"><path d="M7 15 V12 L1.5 6 V3.5 A2 2 0 0 1 3.5 1.5 H14.5 A2 2 0 0 1 16.5 3.5 V5.5 L14.5 7.5 M7 15 L10.5 18.5 M8.5 9 H13 M10.8 9 V13.5" fill="none" stroke="#5a8db0" stroke-width="1.6" stroke-linejoin="round"/></svg>
<svg class="a" style="left:1612px;top:516px" width="18" height="15" viewBox="0 0 18 15"><path d="M9 0.5 V11 M4.5 6.8 L9 11.2 L13.5 6.8 M0.5 14.2 H17.5" fill="none" stroke="#6a9cbb" stroke-width="1.5" stroke-linecap="round"/></svg>
<div class="t" style="top:512.50px;font-size:14.5px;left:1635px;color:#222;">Esporta</div>
<svg class="a" style="left:1688px;top:520px" width="6" height="4" viewBox="0 0 6 4"><path d="M0 0 H6 L3 3.5 Z" fill="#222"/></svg>
<svg class="a" style="left:1716px;top:514px" width="19" height="18" viewBox="0 0 19 18"><path d="M1 0.5 V17 H18.5" fill="none" stroke="#5e8aa8" stroke-width="1.4"/><path d="M3.5 13.5 L7.5 8 L10.5 11 L15.5 3.5 L17 5.5" fill="none" stroke="#5e8aa8" stroke-width="1.4" stroke-linejoin="round"/></svg>
<svg class="a" style="left:1758px;top:514px" width="15" height="16" viewBox="0 0 15 16"><path d="M0 0H6V4H0Z M8.5 0H14.5V4H8.5Z M0 5.8H6V9.8H0Z M8.5 5.8H14.5V9.8H8.5Z M0 11.6H6V15.6H0Z M8.5 11.6H14.5V15.6H8.5Z" fill="#5a8cab"/></svg>
<div class="a" style="left:1360px;top:556px;width:429px;height:25px;background:#f2f2f2;"></div>
<div class="a" style="left:1360px;top:556px;width:429px;height:1px;background:#9fb4c4;"></div>
<div class="a" style="left:1360px;top:580px;width:429px;height:1px;background:#9fb4c4;"></div>
<div class="a" style="left:1436px;top:557px;width:1px;height:23px;background:#9fb4c4;"></div>
<div class="a" style="left:1541px;top:557px;width:1px;height:23px;background:#9fb4c4;"></div>
<div class="a" style="left:1666px;top:557px;width:1px;height:23px;background:#9fb4c4;"></div>
<div class="a" style="left:1780px;top:557px;width:1px;height:23px;background:#9fb4c4;"></div>
<div class="t" style="top:557.70px;font-size:12.5px;left:1366.5px;color:#111;">Pag.</div>
<div class="t" style="top:557.70px;font-size:12.5px;left:1443px;color:#111;">Scadenza</div>
<div class="t" style="top:557.70px;font-size:12.5px;left:1548px;color:#111;">Importo</div>
<div class="t" style="top:557.70px;font-size:12.5px;left:1673px;color:#111;">Tipo pag</div>
<div class="t" style="top:557.70px;font-size:12.5px;left:1787px;color:#111;"></div>
<div class="a" style="left:1360px;top:581px;width:76px;height:42px;background:#fff;"></div>
<div class="a" style="left:1436px;top:581px;width:230px;height:42px;background:#f08080;"></div>
<div class="a" style="left:1666px;top:581px;width:114px;height:42px;background:#bfdcf6;"></div>
<div class="a" style="left:1360px;top:623px;width:76px;height:42px;background:#f0f8fd;"></div>
<div class="a" style="left:1436px;top:623px;width:105px;height:42px;background:#e8e8e8;"></div>
<div class="a" style="left:1541px;top:623px;width:125px;height:42px;background:#f08080;"></div>
<div class="a" style="left:1666px;top:623px;width:114px;height:42px;background:#e8e8e8;"></div>
<div class="a" style="left:1388px;top:593px;width:18px;height:18px;background:#fff;border:1.4px solid #c6c6c6;border-radius:3.5px;box-sizing:border-box;"></div>
<div class="a" style="left:1388px;top:635px;width:18px;height:18px;background:#fff;border:1.4px solid #c6c6c6;border-radius:3.5px;box-sizing:border-box;"></div>
<div class="t" style="top:591.50px;font-size:12.5px;left:1440px;color:#111;">31/07/2024</div>
<div class="t" style="top:591.50px;font-size:12.5px;left:1063px;width:600px;text-align:right;color:#111;">75,00</div>
<div class="t" style="top:591.50px;font-size:12.5px;left:1670px;color:#111;">R.B. o RIBA</div>
<div class="t" style="top:633.50px;font-size:12.5px;left:1440px;color:#111;">30/09/2024</div>
<div class="t" style="top:633.50px;font-size:12.5px;left:1063px;width:600px;text-align:right;color:#111;">75,00</div>
<div class="t" style="top:633.50px;font-size:12.5px;left:1670px;color:#111;">R.B. o RIBA</div>
<div class="a" style="left:1361px;top:801px;width:426px;height:20px;background:#f0f0f0;"></div>
<div class="a" style="left:1361px;top:801px;width:47px;height:20px;background:#ffffff;"></div>
<svg class="a" style="left:1364px;top:807px" width="10" height="8" viewBox="0 0 10 8"><path d="M0.7 0 V8" stroke="#4a5a70" stroke-width="1.4"/><path d="M5.5 0 L1.5 4 L5.5 8 Z M9.5 0 L5.5 4 L9.5 8 Z" fill="#9aa4b4"/></svg>
<div class="a" style="left:1377px;top:801px;width:31px;height:20px;background:#fff;"></div>
<div class="t" style="top:801.50px;font-size:12.5px;left:1377.0px;width:30px;text-align:center;color:#111;">1/2</div>
<div class="a" style="left:1408px;top:801px;width:15px;height:20px;background:#eef6fc;"></div>
<svg class="a" style="left:1410px;top:807px" width="10" height="8" viewBox="0 0 10 8"><path d="M9.3 0 V8" stroke="#3a4a70" stroke-width="1.4"/><path d="M0.5 0 L4.5 4 L0.5 8 Z M4.5 0 L8.5 4 L4.5 8 Z" fill="#3a4a70"/></svg>
<svg class="a" style="left:1431px;top:806px" width="6" height="9" viewBox="0 0 6 9"><path d="M6 0 L0 4.5 L6 9 Z" fill="#c8c8c8"/></svg>
<svg class="a" style="left:1775px;top:806px" width="6" height="9" viewBox="0 0 6 9"><path d="M0 0 L6 4.5 L0 9 Z" fill="#c8c8c8"/></svg>
<div class="a" style="left:1360px;top:821px;width:408px;height:112px;background:#eef7fd;"></div>
<div class="a" style="left:1768px;top:821px;width:19px;height:112px;background:#f0f0f0;"></div>
<svg class="a" style="left:1773px;top:829px" width="10" height="6" viewBox="0 0 10 6"><path d="M0 6 L5 0 L10 6 Z" fill="#c0c0c0"/></svg>
<svg class="a" style="left:1773px;top:920px" width="10" height="6" viewBox="0 0 10 6"><path d="M0 0 L10 0 L5 6 Z" fill="#c0c0c0"/></svg>
<div class="t" style="top:820.50px;font-size:13.3px;left:1364px;color:#222;font-family:'Liberation Mono',monospace;">Giroconto IVA ind. MANUALE</div>
<div class="t" style="top:943.50px;font-size:12.5px;left:9px;color:#111;letter-spacing:0.1px;">IMPONIBILE: 132,79,     IVA: 17,21,     TOTALI Dare: 150,00,     Avere: 150,00,     Diff.: 0,00</div>
<div class="t" style="top:973.00px;font-size:13.9px;left:9px;color:#2323b8;">Inserire il cod. del fornitore ed il tot.documento</div>
<div class="t" style="top:943.50px;font-size:12.5px;left:1582px;color:#111;">Saldo attuale</div>
<div class="a" style="left:1686px;top:941px;width:93px;height:25px;background:#eef6fc;"></div>
<div class="t" style="top:943.50px;font-size:12.5px;left:1176px;width:600px;text-align:right;color:#111;">-150,00</div>
<div class="a" style="left:0;top:0;width:1791px;height:995px;box-sizing:border-box;border:1px solid #c4c4c4;border-bottom:none;border-left:none;border-right:none;border-radius:8px 8px 0 0;pointer-events:none;box-shadow:0 0 0 8px #fff"></div>
<svg class="a" style="left:1779px;top:983px" width="12" height="12" viewBox="0 0 12 12"><path d="M12 0 A12 12 0 0 1 0 12 H12 Z" fill="#fff"/><path d="M11.5 1 A11 11 0 0 1 1 12" fill="none" stroke="#bcbcbc" stroke-width="1.2"/></svg>
<svg class="a" style="left:0px;top:985px" width="12" height="10" viewBox="0 0 12 10"><path d="M2 0 A10 10 0 0 0 12 10" fill="none" stroke="#c4c4c4" stroke-width="1.1"/></svg>
</body></html>
